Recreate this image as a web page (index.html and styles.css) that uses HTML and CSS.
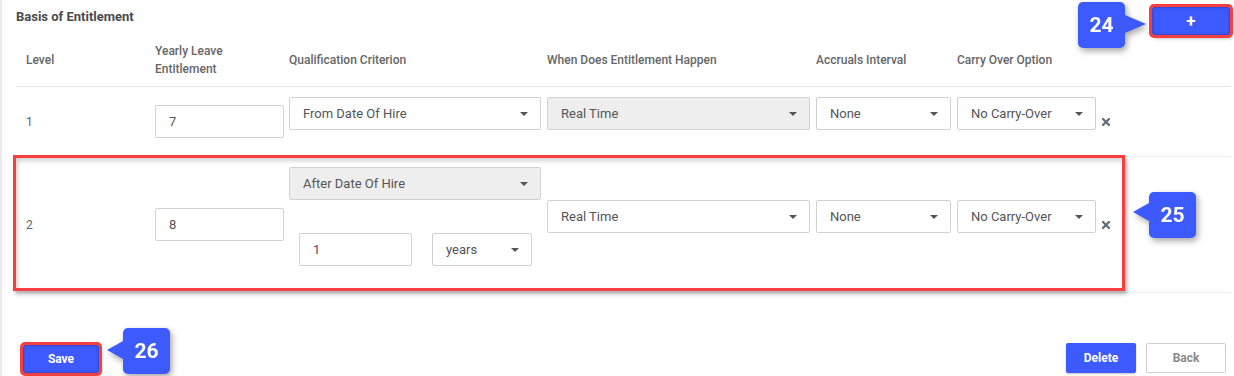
FILE: index.html
```html
<!DOCTYPE html>
<html>
<head>
<meta charset="utf-8">
<link rel="stylesheet" href="styles.css">
</head>
<body>
<div class="screen">
  <div class="panel">
    <div class="title-row">
      <h2 class="title">Basis of Entitlement</h2>
      <button class="btn btn-primary btn-add marked">+</button>
    </div>

    <div class="grid head">
      <div class="c-level">Level</div>
      <div>Yearly Leave<br>Entitlement</div>
      <div>Qualification Criterion</div>
      <div>When Does Entitlement Happen</div>
      <div>Accruals Interval</div>
      <div>Carry Over Option</div>
      <div></div>
    </div>

    <div class="grid row">
      <div class="c-level">1</div>
      <div><div class="input w-yearly">7</div></div>
      <div><div class="select w-qual">From Date Of Hire<span class="caret"></span></div></div>
      <div><div class="select w-when disabled">Real Time<span class="caret"></span></div></div>
      <div><div class="select w-accr">None<span class="caret"></span></div></div>
      <div><div class="select w-carry">No Carry-Over<span class="caret"></span></div></div>
      <div class="c-x"><svg class="x-icon" viewBox="0 0 8 8" width="8" height="8"><path d="M1 1L7 7M7 1L1 7" stroke="currentColor" stroke-width="2.2" stroke-linecap="square"/></svg></div>
    </div>

    <div class="grid row">
      <div class="c-level">2</div>
      <div><div class="input w-yearly">8</div></div>
      <div class="qual-stack">
        <div class="select w-qual disabled">After Date Of Hire<span class="caret"></span></div>
        <div class="sub-row">
          <div class="input w-num num-red">1</div>
          <div class="select w-unit">years<span class="caret"></span></div>
        </div>
      </div>
      <div><div class="select w-when">Real Time<span class="caret"></span></div></div>
      <div><div class="select w-accr">None<span class="caret"></span></div></div>
      <div><div class="select w-carry">No Carry-Over<span class="caret"></span></div></div>
      <div class="c-x"><svg class="x-icon" viewBox="0 0 8 8" width="8" height="8"><path d="M1 1L7 7M7 1L1 7" stroke="currentColor" stroke-width="2.2" stroke-linecap="square"/></svg></div>
    </div>

    <div class="actions">
      <button class="btn btn-primary btn-save marked">Save</button>
      <div class="actions-right">
        <button class="btn btn-primary btn-delete">Delete</button>
        <button class="btn btn-default btn-back">Back</button>
      </div>
    </div>
  </div>

  <div class="mark-box"></div>
  <div class="bubble bubble-24 point-right">24</div>
  <div class="bubble bubble-25 point-left">25</div>
  <div class="bubble bubble-26 point-left">26</div>
</div>
</body>
</html>
```

FILE: styles.css
```css
* { box-sizing: border-box; }
html, body { margin: 0; padding: 0; background: #fff; }
body { font-family: Roboto, "Liberation Sans", Arial, sans-serif; overflow: hidden; }

.screen {
  position: relative;
  width: 1234px;
  height: 376px;
  border-left: 2px solid #ebebeb;
  overflow: hidden;
}

.panel {
  margin-left: 14px;
  width: 1215px;
}

.title-row {
  display: flex;
  justify-content: space-between;
  align-items: flex-start;
  height: 34px;
}
.title {
  margin: 8px 0 0 0;
  font-size: 13px;
  line-height: 18px;
  font-weight: 700;
  color: #4a4a4a;
}

.btn {
  font-family: Roboto, "Liberation Sans", Arial, sans-serif;
  font-weight: 700;
  font-size: 12px;
  border-radius: 2px;
  cursor: pointer;
  padding: 0;
}
.btn-primary {
  background: #3d5afe;
  color: #fff;
  border: none;
  box-shadow: 0 1px 2px rgba(0,0,0,0.25);
}
.btn-default {
  background: #fff;
  color: #8a8a8a;
  border: 1px solid #cfcfcf;
}
.marked {
  outline: 3px solid #f5403f;
  box-shadow: inset 0 0 3px rgba(0,0,30,0.45), 2px 3px 4px rgba(0,0,0,0.35);
}
.btn-add {
  width: 78px;
  height: 28px;
  margin-top: 7px;
  margin-right: 1px;
  font-size: 17px;
  line-height: 28px;
}

.grid {
  display: grid;
  grid-template-columns: 139px 134px 258px 269px 141px 143px 1fr;
  align-items: center;
}
.head {
  height: 53px;
  border-bottom: 1px solid #e6e6e6;
  font-size: 12px;
  line-height: 18px;
  font-weight: 500;
  color: #666;
}
.c-level { padding-left: 10px; }
.row {
  padding: 10px 0;
  border-bottom: 1px solid #ebedf0;
  font-size: 13px;
  color: #555;
}
.row .c-level { color: #5a6472; font-size: 12px; }

.input, .select {
  position: relative;
  height: 33px;
  line-height: 31px;
  border: 1px solid #d2d2d2;
  border-radius: 2px;
  background: #fff;
  font-size: 13px;
  color: #555;
  padding-left: 13px;
  white-space: nowrap;
}
.select { margin-bottom: 16px; }
.select.disabled { background: #eeeeee; }
.caret {
  position: absolute;
  right: 12px;
  top: 14px;
  width: 0;
  height: 0;
  border-left: 4px solid transparent;
  border-right: 4px solid transparent;
  border-top: 4px solid #555;
}

.w-yearly { width: 129px; }
.w-qual { width: 252px; }
.w-when { width: 263px; }
.w-accr { width: 135px; }
.w-carry { width: 139px; }
.w-num { width: 113px; }
.w-unit { width: 100px; margin-bottom: 16px; }
.num-red { color: #7b3b55; }

.qual-stack { display: flex; flex-direction: column; }
.sub-row {
  display: flex;
  align-items: flex-start;
  gap: 20px;
  padding-left: 10px;
  margin-top: 17px;
}

.c-x { padding-left: 2px; display: flex; align-items: center; }
.x-icon { color: #5c6b7a; display: block; }

.actions {
  display: flex;
  justify-content: space-between;
  align-items: center;
  height: 30px;
  margin-top: 50px;
}
.btn-save {
  width: 76px;
  height: 28px;
  margin-left: 7px;
  margin-top: 2px;
}
.actions-right { display: flex; gap: 10px; margin-right: 5px; }
.btn-delete { width: 70px; height: 30px; }
.btn-back { width: 80px; height: 30px; }

/* annotation overlays */
.mark-box {
  position: absolute;
  left: 11px;
  top: 155px;
  width: 1112px;
  height: 136px;
  border: 3px solid #f5403f;
  box-shadow: 2px 3px 4px rgba(0,0,0,0.3), inset 2px 3px 4px rgba(0,0,0,0.18);
}

.bubble {
  position: absolute;
  width: 47px;
  height: 46px;
  background: #3d5afe;
  color: #fff;
  border-radius: 5px;
  font-family: Roboto, "Liberation Sans", Arial, sans-serif;
  font-weight: 700;
  font-size: 21px;
  line-height: 46px;
  text-align: center;
  filter: drop-shadow(2px 3px 3px rgba(0,0,0,0.35));
}
.bubble::after {
  content: "";
  position: absolute;
  width: 0;
  height: 0;
  border-top: 9px solid transparent;
  border-bottom: 9px solid transparent;
}
.point-right::after {
  left: 100%;
  top: 13px;
  border-left: 21px solid #3d5afe;
}
.point-left::after {
  right: 100%;
  top: 11px;
  border-right: 16px solid #3d5afe;
}
.bubble-24 { left: 1076px; top: 2px; }
.bubble-25 { left: 1147px; top: 192px; }
.bubble-26 { left: 121px; top: 328px; }
.bubble-26::after { top: 13px; }
```
